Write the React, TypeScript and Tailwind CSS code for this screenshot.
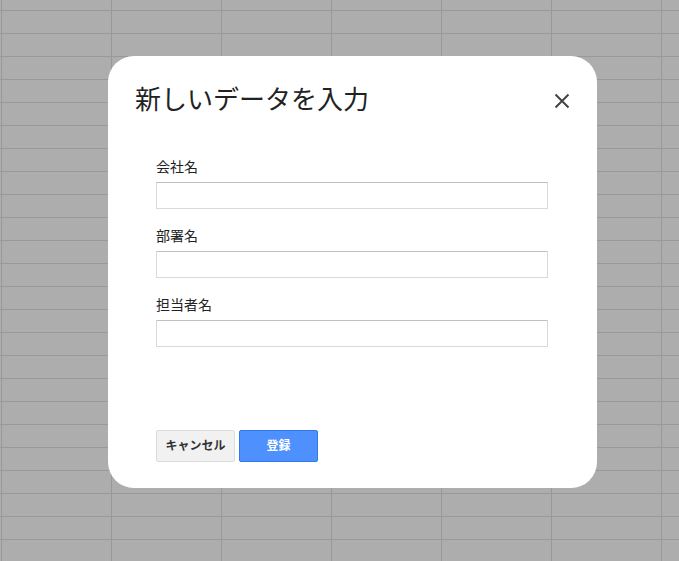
import React from "react"

// Spreadsheet grid behind the dialog
const ROWS = Array.from({ length: 26 })
const COLS = Array.from({ length: 8 })

const FIELDS = ["会社名", "部署名", "担当者名"]

function SheetBackground() {
  return (
    <div className="h-[561px] w-[679px] overflow-hidden bg-[#adadad]">
      <div className="-ml-[108px] -mt-[12px] flex flex-col">
        {ROWS.map((_, r) => (
          <div key={r} className="flex">
            {COLS.map((_, c) => (
              <div key={c} className="h-[23px] w-[110px] shrink-0 border-b border-r border-[#999999]" />
            ))}
          </div>
        ))}
      </div>
    </div>
  )
}

export default function App() {
  return (
    <div
      className="relative h-[561px] w-[679px] overflow-hidden"
      style={{ fontFamily: '"Liberation Sans", Arial, "Noto Sans CJK JP", sans-serif' }}
    >
      <SheetBackground />

      {/* Dialog */}
      <div className="absolute left-[108px] top-[56px] flex h-[432px] w-[489px] flex-col rounded-[26px] bg-white">
        <div className="flex items-center justify-between pl-[27px] pr-[27px] pt-[27px]">
          <h1 className="text-[26px] leading-[34px] font-normal text-[#222]">新しいデータを入力</h1>
          <button aria-label="閉じる" className="mt-[2px] flex h-[16px] w-[16px] items-center justify-center">
            <svg width="16" height="16" viewBox="0 0 16 16">
              <path d="M1.5 1.5 L14.5 14.5 M14.5 1.5 L1.5 14.5" stroke="#444" strokeWidth="2" fill="none" />
            </svg>
          </button>
        </div>

        <div className="mt-[40px] flex flex-col gap-[17px] pl-[48px] pr-[49px]">
          {FIELDS.map((label) => (
            <label key={label} className="flex flex-col">
              <span className="text-[14px] leading-[20px] text-[#222]">{label}</span>
              <input
                type="text"
                className="mt-[5px] h-[27px] w-[392px] rounded-[1px] border border-[#d9d9d9] border-t-[#c0c0c0] bg-white px-[7px] text-[13px] outline-none"
              />
            </label>
          ))}
        </div>

        <div className="mt-auto mb-[26px] flex gap-[4px] pl-[48px]">
          <button className="h-[32px] w-[79px] rounded-[2px] border border-[#dcdcdc] bg-[#f1f1f1] text-[12px] font-bold text-[#333]">
            キャンセル
          </button>
          <button className="h-[32px] w-[79px] rounded-[2px] border border-[#3079ed] bg-[#4d90fe] text-[12px] font-bold text-white">
            登録
          </button>
        </div>
      </div>
    </div>
  )
}
